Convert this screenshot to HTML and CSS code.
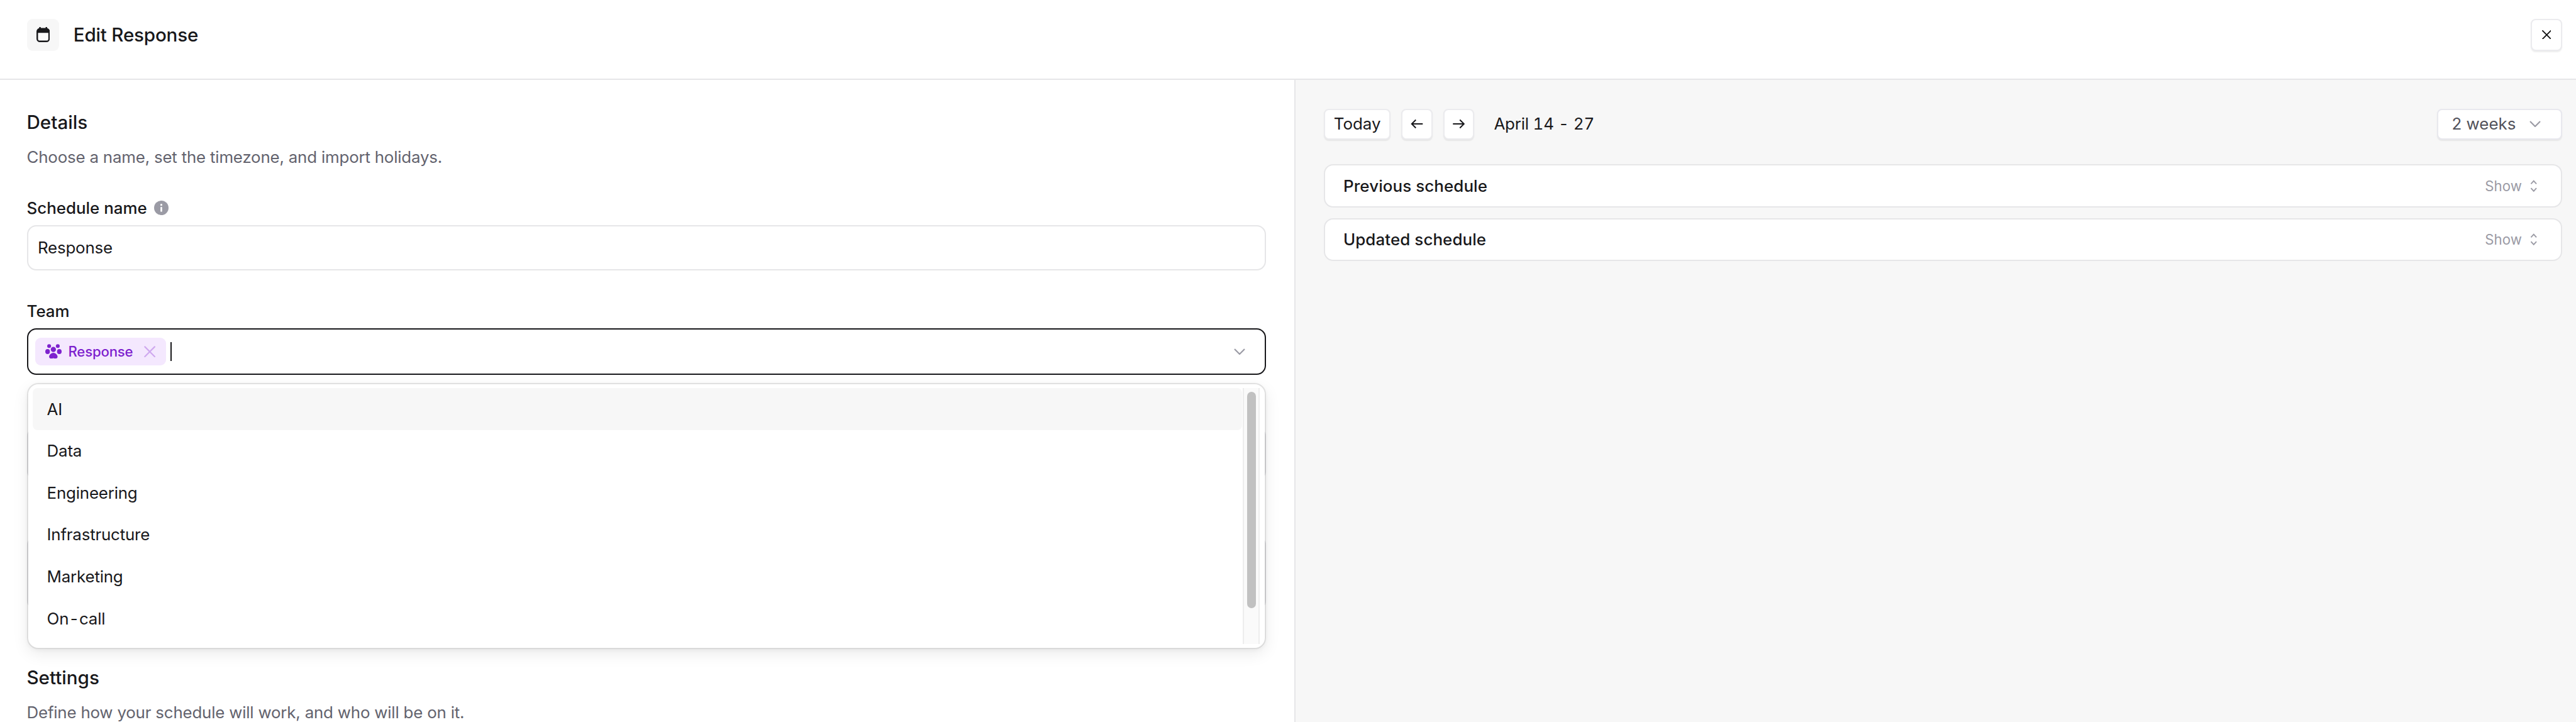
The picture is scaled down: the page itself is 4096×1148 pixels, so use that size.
FILE: index.html
```html
<!DOCTYPE html>
<html lang="en">
<head>
  <meta charset="UTF-8" />
  <meta name="viewport" content="width=device-width, initial-scale=1.0"/>
  <title>Edit Response</title>
  <link rel="stylesheet" href="styles.css">
</head>
<body>
  <header class="top">
    <div class="top-title">
      <div class="cal-box">
        <svg class="cal-icon" viewBox="0 0 23 26">
          <path d="M6 0.5V5M17 0.5V5" stroke="#18181b" stroke-width="2.6" stroke-linecap="round"/>
          <rect x="1.3" y="3" width="20.4" height="21.7" rx="4.5" fill="#fafafa" stroke="#18181b" stroke-width="2.6"/>
          <path d="M1.3 10V7.5A4.5 4.5 0 0 1 5.8 3H17.2A4.5 4.5 0 0 1 21.7 7.5V10Z" fill="#18181b"/>
        </svg>
      </div>
      <h1>Edit Response</h1>
    </div>
    <button class="btn close-btn">
      <svg class="close-icon" viewBox="0 0 16 16"><path d="M1 1L15 15M15 1L1 15" stroke="#111" stroke-width="2" stroke-linecap="round"/></svg>
    </button>
  </header>

  <main class="main">
    <section class="form-panel">
      <h2>Details</h2>
      <p class="sub">Choose a name, set the timezone, and import holidays.</p>

      <div class="label">
        Schedule name
        <svg class="info-icon" viewBox="0 0 24 24">
          <circle cx="12" cy="12" r="12" fill="#9b9ba5"/>
          <circle cx="12" cy="7" r="1.7" fill="#fff"/>
          <rect x="10.6" y="10.5" width="2.8" height="8" rx="1" fill="#fff"/>
        </svg>
      </div>
      <div class="field">Response</div>

      <div class="label team-label">Team</div>
      <div class="team-select">
        <div class="field field-active">
          <span class="tag">
            <svg class="paw-icon" viewBox="0 0 85 76">
              <circle cx="20" cy="10" r="10"/>
              <circle cx="65" cy="10" r="10"/>
              <circle cx="42" cy="28" r="13.5"/>
              <ellipse cx="12" cy="39" rx="12" ry="13"/>
              <ellipse cx="73" cy="39" rx="12" ry="13"/>
              <path d="M42 45C53 45 64 56 64 65C64 77 50 76 42 73C34 76 20 77 20 65C20 56 31 45 42 45Z"/>
            </svg>
            <span>Response</span>
            <svg class="tag-x" viewBox="0 0 20 20"><path d="M1.5 1.5L18.5 18.5M18.5 1.5L1.5 18.5" stroke="#cfa9ef" stroke-width="2.4" stroke-linecap="round"/></svg>
          </span>
          <span class="caret"></span>
          <svg class="chevron team-chevron" viewBox="0 0 18 10"><path d="M1 1L9 9L17 1" fill="none" stroke="#9b9ba5" stroke-width="2.2"/></svg>
        </div>

        <div class="dropdown">
          <div class="option-list">
            <div class="option option-hover">AI</div>
            <div class="option">Data</div>
            <div class="option">Engineering</div>
            <div class="option">Infrastructure</div>
            <div class="option">Marketing</div>
            <div class="option">On<span class="dash">-</span>call</div>
          </div>
          <div class="scroll-track"><div class="scroll-thumb"></div></div>
        </div>
      </div>

      <!-- fields behind the open dropdown, only their edges show -->
      <div class="under-field under-a"></div>
      <div class="under-field under-b"></div>

      <h2 class="settings">Settings</h2>
      <p class="sub">Define how your schedule will work, and who will be on it.</p>
    </section>

    <section class="preview-panel">
      <div class="toolbar">
        <button class="btn today-btn">Today</button>
        <button class="btn arrow-btn">
          <svg class="arrow-icon" viewBox="0 0 20 16"><path d="M19 8H2M8 1.5L1.5 8L8 14.5" fill="none" stroke="#18181b" stroke-width="2"/></svg>
        </button>
        <button class="btn arrow-btn">
          <svg class="arrow-icon" viewBox="0 0 20 16"><path d="M1 8H18M12 1.5L18.5 8L12 14.5" fill="none" stroke="#18181b" stroke-width="2"/></svg>
        </button>
        <span class="date-range">April 14 <span class="dash">-</span> 27</span>
        <button class="btn weeks-btn">
          2 weeks
          <svg class="chevron" viewBox="0 0 18 10"><path d="M1 1L9 9L17 1" fill="none" stroke="#9b9ba5" stroke-width="2.2"/></svg>
        </button>
      </div>

      <div class="schedule-card">
        <span>Previous schedule</span>
        <span class="show">Show
          <svg class="updown-icon" viewBox="0 0 12 20"><path d="M1.5 6.5L6 1.5L10.5 6.5M1.5 13.5L6 18.5L10.5 13.5" fill="none" stroke="#9b9ba5" stroke-width="2"/></svg>
        </span>
      </div>
      <div class="schedule-card">
        <span>Updated schedule</span>
        <span class="show">Show
          <svg class="updown-icon" viewBox="0 0 12 20"><path d="M1.5 6.5L6 1.5L10.5 6.5M1.5 13.5L6 18.5L10.5 13.5" fill="none" stroke="#9b9ba5" stroke-width="2"/></svg>
        </span>
      </div>
    </section>
  </main>
</body>
</html>
```

FILE: styles.css
```css
* {
  box-sizing: border-box;
}

html, body {
  margin: 0;
  height: 1148px;
  overflow: hidden;
}

body {
  background-color: #fff;
  color: #18181b;
  font-family: Inter, "Liberation Sans", sans-serif;
  font-size: 25.9px;
  line-height: 36px;
  letter-spacing: -0.2px;
}

.top {
  height: 127px;
  display: flex;
  justify-content: space-between;
  align-items: flex-start;
  padding: 29.6px 22px 0 42.5px;
  border-bottom: 2px solid #e6e6e8;
}

.top-title {
  display: flex;
  align-items: center;
  gap: 22.5px;
}

.cal-box {
  width: 51.8px;
  height: 51.8px;
  display: flex;
  align-items: center;
  justify-content: center;
  background-color: #f7f7f7;
  border-radius: 9px;
}

.cal-icon {
  width: 21.3px;
  height: 24px;
}

h1 {
  margin: 0;
  font-size: 29.6px;
  font-weight: 500;
  line-height: 36px;
}

.btn {
  display: flex;
  align-items: center;
  justify-content: center;
  padding: 0;
  background-color: #fff;
  border: 2px solid #ebebee;
  border-radius: 8px;
  box-shadow: 0 1.5px 2px rgba(0, 0, 0, 0.07);
  color: #18181b;
  font: inherit;
  letter-spacing: 0;
}

.close-btn {
  width: 50px;
  height: 51px;
}

.close-icon {
  width: 14.8px;
  height: 14.8px;
}

.main {
  display: flex;
  height: 1021px;
}

.form-panel {
  flex: none;
  width: 2060px;
  padding: 49px 45.5px 0 42.5px;
  border-right: 2px solid #e6e6e8;
}

h2 {
  margin: 0;
  font-size: 29.6px;
  font-weight: 500;
  line-height: 36px;
  letter-spacing: 0;
}

.sub {
  margin: 19.75px 0 0;
  color: #63636e;
}

.label {
  display: flex;
  align-items: center;
  gap: 11px;
  margin-top: 45px;
  font-weight: 500;
  letter-spacing: 0;
}

.team-label {
  margin-top: 46.5px;
}

.info-icon {
  width: 23px;
  height: 23px;
}

.field {
  display: flex;
  align-items: center;
  height: 72px;
  margin-top: 9.5px;
  padding: 0 15.5px;
  border: 2px solid #e6e6e8;
  border-radius: 14.8px;
}

.team-select {
  position: relative;
  margin-top: 9.6px;
}

.field-active {
  height: 73.5px;
  margin-top: 0;
  padding: 0 31px 0 11px;
  border-color: #18181b;
}

.tag {
  display: flex;
  align-items: center;
  width: 208px;
  height: 43.8px;
  padding: 0 16.6px 0 16.4px;
  background-color: #f4e8fe;
  border-radius: 9px;
  color: #7e22ce;
  font-size: 22.2px;
  font-weight: 450;
}

.paw-icon {
  width: 26px;
  height: 23.5px;
  margin-right: 10.6px;
  fill: #7e22ce;
}

.tag-x {
  width: 18.3px;
  height: 18.3px;
  margin-left: auto;
}

.caret {
  width: 2px;
  height: 29.5px;
  margin-left: 7.7px;
  background-color: #18181b;
}

.chevron {
  width: 18px;
  height: 10px;
}

.team-chevron {
  margin-left: auto;
}

.dropdown {
  position: absolute;
  top: calc(100% + 13.2px);
  left: 0;
  right: 0;
  z-index: 2;
  display: flex;
  height: 422.8px;
  padding: 6.3px 7.3px 5.5px;
  background-color: #fff;
  background-clip: padding-box;
  border: 2px solid rgba(0, 0, 0, 0.1);
  border-radius: 18px;
  box-shadow: 0 8px 24px rgba(0, 0, 0, 0.08), 0 2px 6px rgba(0, 0, 0, 0.04);
}

.option-list {
  flex: 1;
  padding-right: 1px;
}

.option {
  display: flex;
  align-items: center;
  height: 66.6px;
  padding-left: 22.8px;
  border-radius: 8px;
  white-space: pre;
}

.option-hover {
  height: 66.4px;
  margin-bottom: 0.2px;
  background-color: #f7f7f7;
}

.dash {
  margin: 0 2.5px;
}

.scroll-track {
  flex: none;
  width: 26.8px;
  padding: 5.6px 4.7px 0;
  background-color: #fafafa;
  border-left: 2px solid #ededed;
  border-right: 2px solid #ededed;
}

.scroll-thumb {
  height: 344px;
  background-color: #c1c1c1;
  border-radius: 7.4px;
}

.under-field {
  border: 2px solid #e4e4e7;
  border-radius: 14.8px;
}

.under-a {
  height: 85px;
  margin-top: 83px;
}

.under-b {
  height: 118px;
  margin-top: 88px;
}

.settings {
  margin-top: 89.1px;
}

.preview-panel {
  flex: 1;
  padding: 45.7px 22.5px 0 45px;
  background-color: #f7f7f7;
}

.toolbar {
  display: flex;
  align-items: center;
  margin-bottom: 39.5px;
}

.today-btn {
  width: 106.4px;
  height: 49.3px;
  margin-right: 17px;
}

.arrow-btn {
  width: 49.5px;
  height: 49.3px;
  margin-right: 17px;
}

.arrow-icon {
  width: 20.5px;
  height: 16px;
}

.date-range {
  margin-left: 14px;
  font-variant-numeric: tabular-nums;
}

.date-range .dash {
  margin: 0 0.5px;
}

.weeks-btn {
  justify-content: space-between;
  width: 199px;
  height: 49.3px;
  margin-left: auto;
  padding: 0 31.5px 0 22px;
  border-color: #e8e8ee;
  color: #52525b;
}

.schedule-card {
  display: flex;
  align-items: center;
  justify-content: space-between;
  height: 68.5px;
  margin-bottom: 16.9px;
  padding: 0 37px 0 29px;
  background-color: #fff;
  border: 2px solid #e6e6e8;
  border-radius: 14.8px;
  font-weight: 450;
  letter-spacing: 0.1px;
}

.show {
  display: flex;
  align-items: center;
  gap: 13px;
  color: #9b9ba5;
  font-size: 22.2px;
  font-weight: 400;
}

.updown-icon {
  width: 11.5px;
  height: 19.5px;
}
```
